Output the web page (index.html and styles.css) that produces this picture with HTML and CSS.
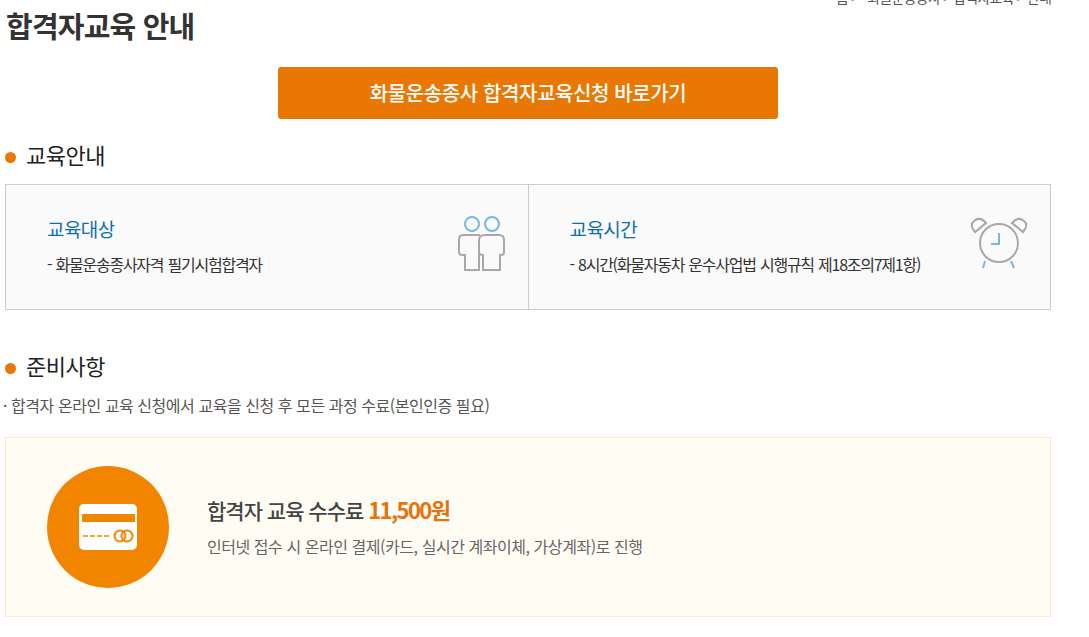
FILE: index.html
```html
<!DOCTYPE html>
<html lang="ko">
<head>
    <meta charset="UTF-8">
    <title>합격자교육 안내</title>
    <link rel="stylesheet" href="styles.css">
</head>
<body>
    <div class="crumb">홈 &gt; &nbsp; 화물운송종사 &gt; 합격자교육 &gt; 안내</div>
    <h1 class="title">합격자교육 안내</h1>
    <div class="btn-row"><a class="btn" href="#">화물운송종사 합격자교육신청 바로가기</a></div>

    <h2 class="sec">교육안내</h2>
    <div class="info">
        <div class="info-cell">
            <div>
                <h3>교육대상</h3>
                <p>- 화물운송종사자격 필기시험합격자</p>
            </div>
            <svg class="ico" width="50" height="56" viewBox="0 0 50 56" fill="none" stroke="#a8a8a8" stroke-width="2">
                <circle cx="16" cy="8" r="7" stroke="#7ab8dc"/>
                <circle cx="36" cy="8" r="7" stroke="#7ab8dc"/>
                <path d="M24 19 H7 Q3 19 3 24 V36 Q3 39 6 39 H9 V54 H23 V39 H24"/>
                <path d="M29 19 H43 Q48 19 48 24 V36 Q48 39 45 39 H44 V54 H27 V39 Q23 39 23 36 V24 Q23 19 29 19 Z"/>
            </svg>
        </div>
        <div class="info-cell">
            <div>
                <h3>교육시간</h3>
                <p>- 8시간(화물자동차 운수사업법 시행규칙 제18조의7제1항)</p>
            </div>
            <svg class="ico" width="58" height="56" viewBox="0 0 58 56" fill="none" stroke="#a8a8a8" stroke-width="2">
                <circle cx="29" cy="27" r="19"/>
                <path d="M29 17 V28 H21" stroke="#7ab8dc"/>
                <path d="M5 16 Q-1 9 4 5 Q10 0 16 7 Z"/>
                <path d="M53 16 Q59 9 54 5 Q48 0 42 7 Z"/>
                <path d="M15 45 L13 52 M41 45 L44 52" stroke="#7ab8dc"/>
            </svg>
        </div>
    </div>

    <h2 class="sec sec-2">준비사항</h2>
    <p class="note">· 합격자 온라인 교육 신청에서 교육을 신청 후 모든 과정 수료(본인인증 필요)</p>
    <div class="fee">
        <div class="fee-circle">
            <svg width="58" height="46" viewBox="0 0 58 46">
                <rect width="58" height="46" rx="5" fill="#fff"/>
                <rect x="3" y="10" width="53" height="8" fill="#f28500"/>
                <path d="M4 32 H31" stroke="#f28500" stroke-width="1.5" stroke-dasharray="5 2"/>
                <circle cx="41" cy="32" r="5.5" fill="none" stroke="#f28500" stroke-width="2"/>
                <circle cx="48" cy="32" r="5.5" fill="none" stroke="#f28500" stroke-width="2"/>
            </svg>
        </div>
        <div class="fee-text">
            <h3>합격자 교육 수수료 <em>11,500원</em></h3>
            <p>인터넷 접수 시 온라인 결제(카드, 실시간 계좌이체, 가상계좌)로 진행</p>
        </div>
    </div>
</body>
</html>
```

FILE: styles.css
```css
body {
    margin: 0;
    width: 1051px;
    height: 637px;
    overflow: hidden;
    font-family: "Noto Sans CJK KR", "Noto Sans", sans-serif;
    color: #333;
    background: #fff;
}
.crumb {
    margin-top: -3px;
    height: 8px;
    line-height: 0;
    font-size: 14px;
    text-align: right;
    color: #555;
    letter-spacing: -0.8px;
}
.title {
    margin: 0 0 0 6px;
    font-size: 29px;
    line-height: 40px;
    font-weight: 700;
    letter-spacing: -0.8px;
}
.btn-row {
    display: flex;
    justify-content: center;
    padding: 22px 0 0 5px;
}
.btn {
    display: block;
    width: 500px;
    height: 52px;
    line-height: 52px;
    background: #e87803;
    border-radius: 3px;
    color: #fff;
    text-align: center;
    text-decoration: none;
    font-size: 20px;
    font-weight: 500;
    letter-spacing: -0.4px;
}
.sec {
    margin: 19px 0 0 5px;
    font-size: 22px;
    line-height: 32px;
    font-weight: 400;
    letter-spacing: -0.5px;
    color: #222;
    display: flex;
    align-items: center;
    gap: 10px;
}
.sec::before {
    content: "";
    width: 11px;
    height: 11px;
    border-radius: 50%;
    background: #e87803;
    margin-top: 6px;
}
.sec-2 {
    margin-top: 39px;
}
.info {
    display: flex;
    margin: 14px 0 0 5px;
    height: 126px;
    box-sizing: border-box;
    border: 1px solid #ccc;
    background: #fafafa;
}
.info-cell {
    flex: 1;
    display: flex;
    justify-content: space-between;
    padding: 29px 22px 0 41px;
}
.info-cell + .info-cell {
    border-left: 1px solid #ccc;
}
.info-cell h3 {
    margin: 0;
    font-size: 19px;
    line-height: 30px;
    font-weight: 400;
    color: #0f6fae;
    letter-spacing: -0.6px;
}
.info-cell p {
    margin: 9px 0 0;
    font-size: 16px;
    line-height: 22px;
    letter-spacing: -1.25px;
    word-spacing: 1px;
}
.ico {
    margin-top: 2px;
}
.note {
    margin: 12px 0 0 3px;
    font-size: 16px;
    line-height: 24px;
    color: #555;
    letter-spacing: -0.45px;
}
.fee {
    display: flex;
    align-items: center;
    gap: 38px;
    margin: 20px 0 0 5px;
    height: 180px;
    box-sizing: border-box;
    padding-left: 41px;
    border: 1px solid #f3ead2;
    background: #fffcf4;
}
.fee-circle {
    width: 122px;
    height: 122px;
    border-radius: 50%;
    background: #f28500;
    display: flex;
    align-items: center;
    justify-content: center;
}
.fee-text {
    padding-bottom: 3px;
}
.fee-text h3 {
    margin: 0;
    font-size: 21px;
    line-height: 30px;
    font-weight: 500;
    color: #444;
    letter-spacing: -1px;
}
.fee-text em {
    font-style: normal;
    color: #e5720a;
    font-size: 22px;
    font-weight: 700;
    letter-spacing: -1.6px;
}
.fee-text p {
    margin: 9px 0 0;
    font-size: 16px;
    line-height: 24px;
    color: #666;
    letter-spacing: -0.45px;
}
```
